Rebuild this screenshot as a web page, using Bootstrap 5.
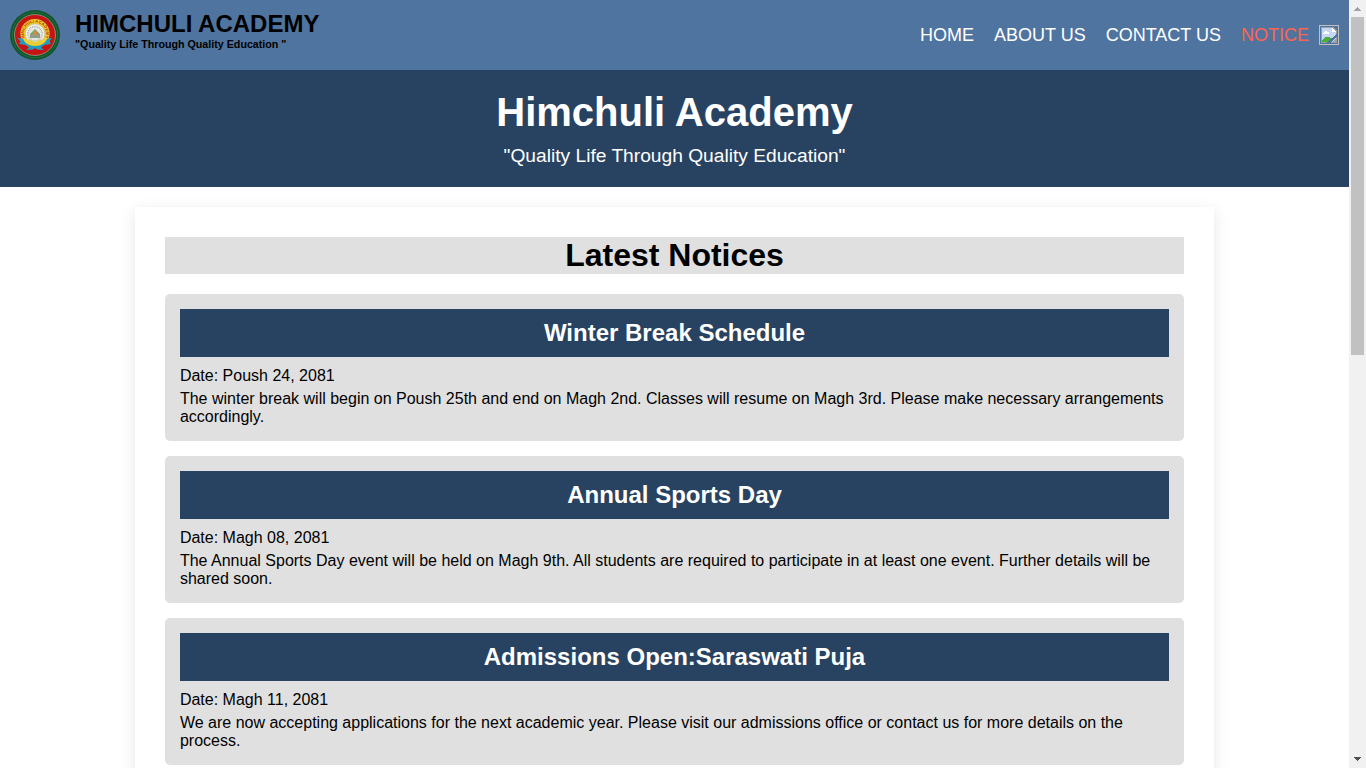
<!DOCTYPE html>
<html lang="en">
<head>
<meta charset="utf-8">
<meta name="viewport" content="width=device-width, initial-scale=1">
<title>Himchuli Academy - Notices</title>
<link rel="stylesheet" href="https://cdn.jsdelivr.net/npm/bootstrap@5.3.0/dist/css/bootstrap.min.css">
<style>
body { font-family: "Liberation Sans", Arial, sans-serif; font-size: 16px; line-height: 18px; color: #000; background: #fff; }
h1, h2, h3, p { margin: 0; }
.top-bar { height: 70px; background: #4f749f; padding: 0 10px; }
.brand-name { font-size: 24px; line-height: 27px; font-weight: 700; }
.brand-motto { font-size: 10.7px; line-height: 13px; font-weight: 700; margin-top: 1px; }
.brand-text { height: 50px; margin-left: 15px; }
.menu { gap: 20px; font-size: 18px; line-height: 20px; margin-right: 10px; }
.menu a { color: #fff; text-decoration: none; }
.menu a.current { color: #ff6352; }
.banner { height: 117px; padding-top: 19px; background: #284361; color: #fff; }
.banner h1 { font-size: 40px; line-height: 46px; font-weight: 700; }
.banner p { font-size: 19.2px; line-height: 22px; margin-top: 10px; }
.notices { width: 80%; margin: 20px auto; padding: 30px; background: #fff; box-shadow: 0 4px 15px rgba(0,0,0,.1); }
.notices h2 { font-size: 32px; line-height: 37px; font-weight: 700; background: #e0e0e0; margin-bottom: 20px; }
.notice-item { background: #e0e0e0; padding: 15px; border-radius: 5px; margin-bottom: 15px; }
.notice-item h3 { font-size: 24px; line-height: 28px; font-weight: 700; color: #fff; background: #284361; padding: 10px; margin-bottom: 10px; }
.notice-item p + p { margin-top: 5px; }
.scroll-track { width: 17px; background: #f1f1f1; }
.scroll-thumb { width: 13px; height: 338px; background: #c1c1c1; }
</style>
</head>
<body>
<div class="d-flex vh-100 overflow-hidden">
  <div class="flex-grow-1 overflow-hidden">
    <nav class="top-bar d-flex align-items-center justify-content-between">
      <div class="d-flex align-items-center">
        <svg width="50" height="50" viewBox="0 0 50 50" aria-label="Himchuli Academy crest">
          <defs><path id="arc" d="M14.9 27.9A11 11 0 1 1 35.1 27.9"/></defs>
          <circle cx="25" cy="25" r="25" fill="#12532f"/>
          <circle cx="25" cy="25" r="22.8" fill="none" stroke="#23783f" stroke-width=".8"/>
          <circle cx="25" cy="25" r="20.5" fill="#c51414" stroke="#a9c09c" stroke-width=".6"/>
          <circle cx="25" cy="23.5" r="14.6" fill="#f5cf27"/>
          <text font-family="Liberation Sans" font-size="4.2" font-weight="700" fill="#b5381c" textLength="43" lengthAdjust="spacingAndGlyphs"><textPath href="#arc">HIMCHULI ACADEMY</textPath></text>
          <path d="M7 27.5l6 1.5q3 7 12 7t12-7l5-1.5-2.5 4 1.5 2.5-7 1-3 2.5 3 2.5-7-.5-2-1.5-2 1.5-7 .5 3-2.5-3-2.5-7-1 1.500-2.500z" fill="#1f9fc0"/>
          <circle cx="25" cy="23.700" r="9.900" fill="#f0efe8" stroke="#a0a090" stroke-width=".5"/>
          <circle cx="25" cy="23.700" r="7.200" fill="#e6e7df" stroke="#a4a89a" stroke-width="1.200" stroke-dasharray="1 .8"/>
          <path d="M20 24l5-5 5 5z" fill="#6ba77c"/>
          <path d="M20 24h10v4H20z" fill="#8f9c87"/>
          <circle cx="25" cy="23" r="2.200" fill="#d88a42"/>
          <path d="M18 29l7 3 7-3-2 4-5 2-5-2z" fill="#e5ce3a"/>
        </svg>
        <div class="brand-text">
          <div class="brand-name">HIMCHULI ACADEMY</div>
          <div class="brand-motto">"Quality Life Through Quality Education "</div>
        </div>
      </div>
      <div class="d-flex align-items-center">
        <div class="menu d-flex">
          <a href="#">HOME</a><a href="#">ABOUT US</a><a href="#">CONTACT US</a><a href="#" class="current">NOTICE</a>
        </div>
        <svg width="20" height="20" viewBox="0 0 20 20" shape-rendering="crispEdges">
          <path d="M.5.5h19v19H.5z" fill="none" stroke="#c0c0c0"/>
          <path d="M2 2h12l4 4v12H2z" fill="#9aa0a8"/>
          <path d="M3 3h10l4 4v10H3z" fill="#c5d7f5"/>
          <path d="M5 7h1V6h2v1h2v2H4V8h1z" fill="#fff"/>
          <path d="M3 17v-2l3-3h4l3 3v2z" fill="#4caf35"/>
          <path d="M13 3l4 4h-4z" fill="#fff"/>
          <path d="M18 9v3l-7 6H8v-1z" fill="#4f749f"/>
          <path d="M13 17l4-4v4z" fill="#8fae9e"/>
        </svg>
      </div>
    </nav>
    <header class="banner text-center">
      <h1>Himchuli Academy</h1>
      <p>"Quality Life Through Quality Education"</p>
    </header>
    <main class="notices">
      <h2 class="text-center">Latest Notices</h2>
      <article class="notice-item">
        <h3 class="text-center">Winter Break Schedule</h3>
        <p>Date: Poush 24, 2081</p>
        <p>The winter break will begin on Poush 25th and end on Magh 2nd. Classes will resume on Magh 3rd. Please make necessary arrangements accordingly.</p>
      </article>
      <article class="notice-item">
        <h3 class="text-center">Annual Sports Day</h3>
        <p>Date: Magh 08, 2081</p>
        <p>The Annual Sports Day event will be held on Magh 9th. All students are required to participate in at least one event. Further details will be shared soon.</p>
      </article>
      <article class="notice-item">
        <h3 class="text-center">Admissions Open:Saraswati Puja</h3>
        <p>Date: Magh 11, 2081</p>
        <p>We are now accepting applications for the next academic year. Please visit our admissions office or contact us for more details on the process.</p>
      </article>
    </main>
  </div>
  <div class="scroll-track flex-shrink-0 d-flex flex-column align-items-center justify-content-between">
    <svg width="17" height="17" shape-rendering="crispEdges"><path d="M5 11v-1h1V9h1V8h1V7h1v1h1v1h1v1h1v1z" fill="#a3a3a3"/></svg>
    <div class="scroll-thumb"></div>
    <svg class="mt-auto" width="17" height="17" shape-rendering="crispEdges"><path d="M5 6h7v1h-1v1h-1v1H9v1H8V9H7V8H6V7H5z" fill="#505050"/></svg>
  </div>
</div>
<script src="https://cdn.jsdelivr.net/npm/bootstrap@5.3.0/dist/js/bootstrap.bundle.min.js"></script>
</body>
</html>
